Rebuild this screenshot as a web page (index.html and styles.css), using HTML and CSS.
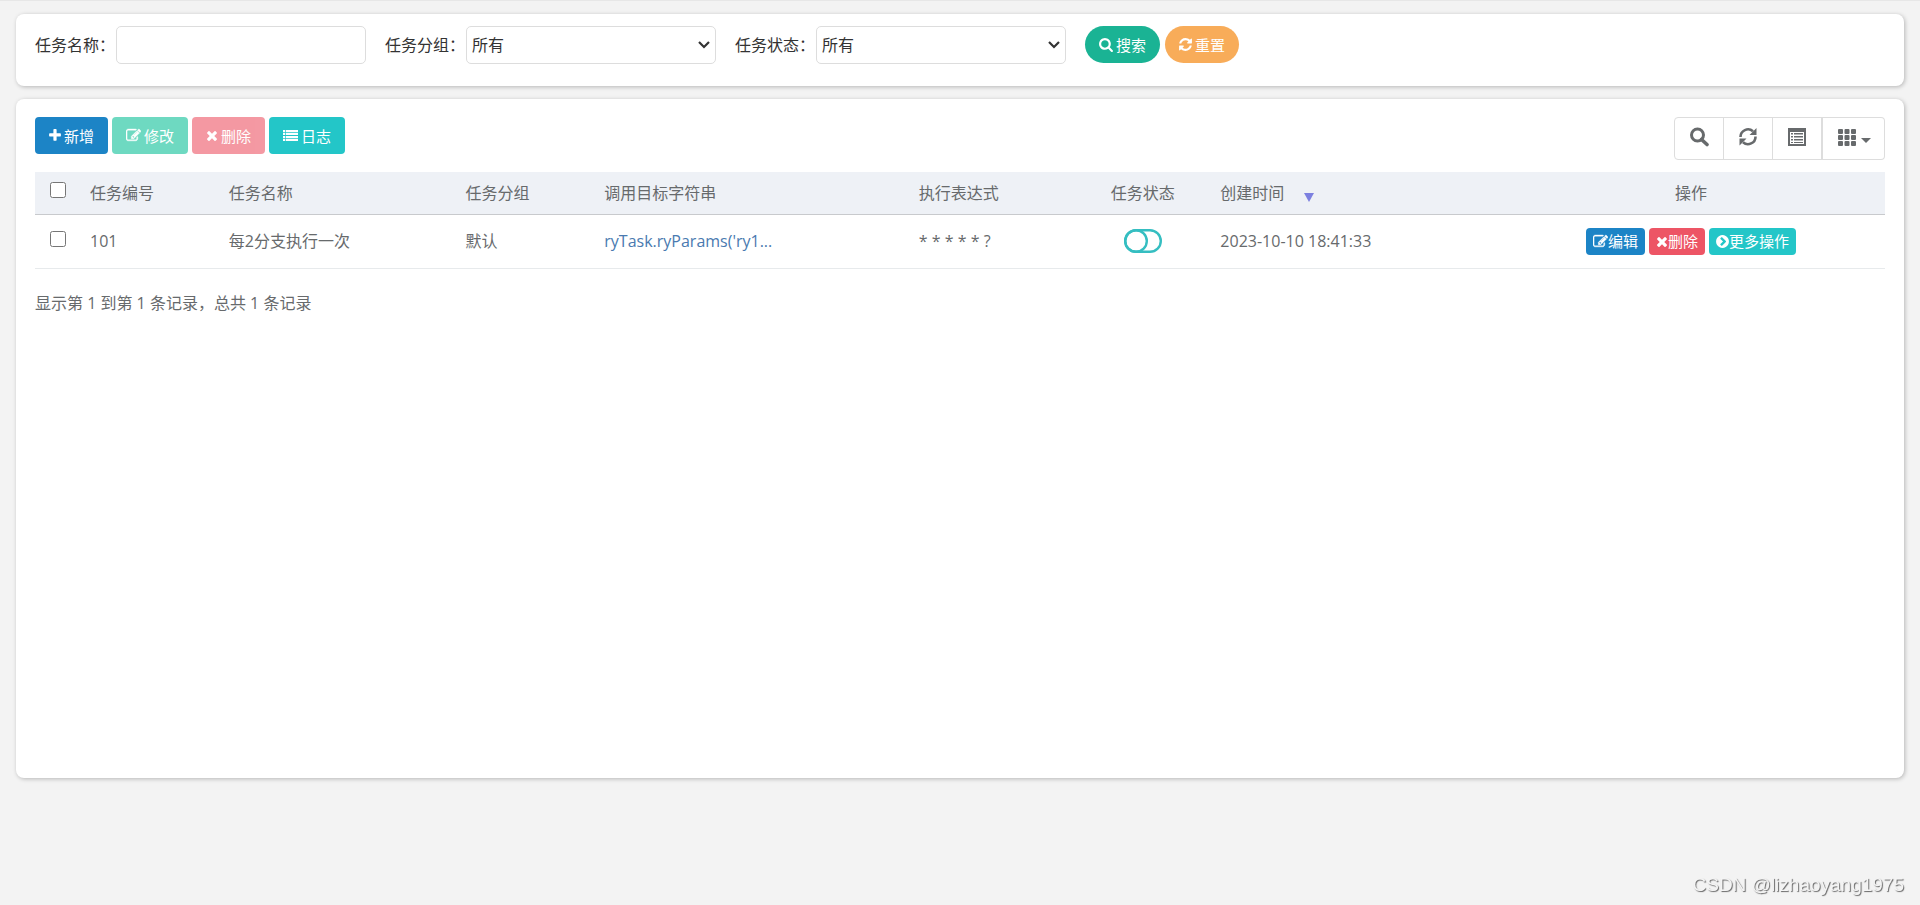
FILE: index.html
```html
<!DOCTYPE html>
<html lang="zh-CN">
<head>
<meta charset="utf-8">
<title>定时任务</title>
<link rel="stylesheet" href="styles.css">
</head>
<body>
<svg class="sprite" aria-hidden="true">
  <symbol id="plus" viewBox="192 0 1408 1792"><path d="M1600 736v192q0 40-28 68t-68 28h-416v416q0 40-28 68t-68 28h-192q-40 0-68-28t-28-68v-416h-416q-40 0-68-28t-28-68v-192q0-40 28-68t68-28h416v-416q0-40 28-68t68-28h192q40 0 68 28t28 68v416h416q40 0 68 28t28 68z"/></symbol>
  <symbol id="edit" viewBox="0 0 1792 1792"><path stroke="currentColor" stroke-width="50" d="M888 1184l116-116-152-152-116 116v56h96v96h56zm440-720q-16-16-33 1l-350 350q-17 17-1 33t33-1l350-350q17-17 1-33zm80 594v190q0 119-84.500 203.500t-203.500 84.500h-832q-119 0-203.500-84.500t-84.500-203.500v-832q0-119 84.500-203.500t203.500-84.500h832q63 0 117 25 15 7 18 23 3 17-9 29l-49 49q-14 14-32 8-23-6-45-6h-832q-66 0-113 47t-47 113v832q0 66 47 113t113 47h832q66 0 113-47t47-113v-126q0-13 9-22l64-64q15-15 35-7t20 29zm-96-738l288 288-672 672h-288v-288zm444 132l-92 92-288-288 92-92q28-28 68-28t68 28l152 152q28 28 28 68t-28 68z"/></symbol>
  <symbol id="times" viewBox="192 0 1408 1792"><path d="M1490 1322q0 40-28 68l-136 136q-28 28-68 28t-68-28l-294-294-294 294q-28 28-68 28t-68-28l-136-136q-28-28-28-68t28-68l294-294-294-294q-28-28-28-68t28-68l136-136q28-28 68-28t68 28l294 294 294-294q28-28 68-28t68 28l136 136q28 28 28 68t-28 68l-294 294 294 294q28 28 28 68z"/></symbol>
  <symbol id="list" viewBox="0 0 1792 1792"><path d="M0 240h256v256H0zM0 592h256v256H0zM0 944h256v256H0zM0 1296h256v256H0zM340 240h1452v256H340zM340 592h1452v256H340zM340 944h1452v256H340zM340 1296h1452v256H340z"/></symbol>
  <symbol id="search" viewBox="64 0 1664 1792"><path d="M1216 832q0-185-131.500-316.500t-316.500-131.500-316.500 131.500-131.500 316.500 131.500 316.500 316.500 131.500 316.500-131.500 131.500-316.500zm512 832q0 52-38 90t-90 38q-54 0-90-38l-343-342q-179 124-399 124-143 0-273.500-55.500t-225-150-150-225-55.500-273.500 55.500-273.500 150-225 225-150 273.500-55.500 273.500 55.500 225 150 150 225 55.500 273.500q0 220-124 399l343 343q37 37 37 90z"/></symbol>
  <symbol id="refresh" viewBox="128 0 1536 1792"><path d="M1639 1056q0 5-1 7-64 268-268 434.500t-478 166.500q-146 0-282.500-55t-243.500-157l-129 129q-19 19-45 19t-45-19-19-45v-448q0-26 19-45t45-19h448q26 0 45 19t19 45-19 45l-137 137q71 66 161 102t187 36q134 0 250-65t186-179q11-17 53-117 8-23 30-23h192q13 0 22.500 9.500t9.500 22.500zm25-800v448q0 26-19 45t-45 19h-448q-26 0-45-19t-19-45 19-45l138-138q-148-137-349-137-134 0-250 65t-186 179q-11 17-53 117-8 23-30 23h-199q-13 0-22.500-9.500t-9.500-22.500v-7q65-268 270-434.500t480-166.500q146 0 284 55.500t245 156.500l130-129q19-19 45-19t45 19 19 45z"/></symbol>
  <symbol id="next" viewBox="128 0 1536 1792"><path d="M845 1395l454-454q19-19 19-45t-19-45l-454-454q-19-19-45-19t-45 19l-102 102q-19 19-19 45t19 45l307 307-307 307q-19 19-19 45t19 45l102 102q19 19 45 19t45-19zm819-499q0 209-103 385.500t-279.500 279.500-385.500 103-385.500-103-279.500-279.500-103-385.500 103-385.500 279.500-279.500 385.500-103 385.500 103 279.500 279.500 103 385.500z"/></symbol>
</svg>

<form class="card search-form">
  <div class="field"><label for="job-name">任务名称：</label><input class="control" id="job-name" type="text"></div>
  <div class="field"><label for="job-group">任务分组：</label><select class="control" id="job-group"><option>所有</option></select></div>
  <div class="field"><label for="job-status">任务状态：</label><select class="control" id="job-status"><option>所有</option></select></div>
  <div class="form-actions">
    <button type="button" class="btn round green"><svg class="w14"><use href="#search"/></svg>搜索</button>
    <button type="button" class="btn round orange"><svg class="w13"><use href="#refresh"/></svg>重置</button>
  </div>
</form>

<main class="card panel">
  <div class="toolbar">
    <div class="actions">
      <button type="button" class="btn blue"><svg class="w12"><use href="#plus"/></svg>新增</button>
      <button type="button" class="btn green" disabled><svg class="w15"><use href="#edit"/></svg>修改</button>
      <button type="button" class="btn red" disabled><svg class="w12"><use href="#times"/></svg>删除</button>
      <button type="button" class="btn teal"><svg class="w15"><use href="#list"/></svg>日志</button>
    </div>
    <div class="tools">
      <button type="button" aria-label="搜索"><svg width="20" height="20" viewBox="0 0 20 20"><circle cx="8.500" cy="8" r="6" fill="none" stroke="currentColor" stroke-width="3"/><path d="M12.500 12.500l5.500 5" fill="none" stroke="currentColor" stroke-width="3.600" stroke-linecap="round"/></svg></button>
      <button type="button" aria-label="刷新"><svg width="20" height="20" viewBox="0 0 20 20"><path d="M2.500 10A7.500 7.500 0 0 1 15 4.300M17.500 9.500A7.500 7.500 0 0 1 5 15.200" fill="none" stroke="currentColor" stroke-width="2.600"/><path d="M18.500 1v7h-7zM1.500 18.500v-7h7z" fill="currentColor"/></svg></button>
      <button type="button" aria-label="视图"><svg width="20" height="20" viewBox="0 0 20 20"><path fill="currentColor" fill-rule="evenodd" d="M1 1h18v18H1zM3 5v12h14V5z"/><path fill="currentColor" d="M4 6h2v1.500H4zM4 9h2v1.500H4zM4 12h2v1.500H4zM4 15h2v1H4zM7 6h9v1.500H7zM7 9h9v1.500H7zM7 12h9v1.500H7zM7 15h9v1H7z"/></svg></button>
      <button type="button" aria-label="列"><svg width="20" height="20" viewBox="0 0 20 20" fill="currentColor"><rect x="1" y="2" width="5" height="5" rx="1"/><rect x="7.500" y="2" width="5" height="5" rx="1"/><rect x="14" y="2" width="5" height="5" rx="1"/><rect x="1" y="8" width="5" height="5" rx="1"/><rect x="7.500" y="8" width="5" height="5" rx="1"/><rect x="14" y="8" width="5" height="5" rx="1"/><rect x="1" y="14" width="5" height="5" rx="1"/><rect x="7.500" y="14" width="5" height="5" rx="1"/><rect x="14" y="14" width="5" height="5" rx="1"/></svg><span class="caret"></span></button>
    </div>
  </div>

  <table class="jobs">
    <colgroup><col class="c-check"><col class="c-id"><col class="c-name"><col class="c-group"><col class="c-target"><col class="c-cron"><col class="c-status"><col class="c-time"><col class="c-op"></colgroup>
    <thead>
      <tr>
        <th class="center"><input type="checkbox" aria-label="全选"></th>
        <th>任务编号</th><th>任务名称</th><th>任务分组</th><th>调用目标字符串</th><th>执行表达式</th>
        <th class="center">任务状态</th><th>创建时间<span class="sort"></span></th><th class="center">操作</th>
      </tr>
    </thead>
    <tbody>
      <tr>
        <td class="center"><input type="checkbox" aria-label="选择 101"></td>
        <td>101</td><td>每2分支执行一次</td><td>默认</td>
        <td><a href="#">ryTask.ryParams('ry1...</a></td>
        <td>* * * * * ?</td>
        <td class="center"><button type="button" class="toggle" aria-label="任务状态"><svg width="38" height="24" viewBox="0 0 38 24" fill="none" stroke="currentColor" stroke-width="2.400"><rect x="1.200" y="1.200" width="35.600" height="21.600" rx="10.800"/><circle cx="12" cy="12" r="10.800"/></svg></button></td>
        <td>2023-10-10 18:41:33</td>
        <td><div class="row-actions">
          <button type="button" class="btn small blue"><svg class="w15"><use href="#edit"/></svg>编辑</button>
          <button type="button" class="btn small red"><svg class="w12"><use href="#times"/></svg>删除</button>
          <button type="button" class="btn small teal"><svg class="w13"><use href="#next"/></svg>更多操作</button>
        </div></td>
      </tr>
    </tbody>
  </table>
  <p class="summary">显示第 1 到第 1 条记录，总共 1 条记录</p>
</main>
<div class="watermark">CSDN @lizhaoyang1975</div>
</body>
</html>
```
FILE: styles.css
```css
* { box-sizing: border-box; }
body {
  margin: 0;
  min-height: 100vh;
  padding: 13px 16px 0;
  border-top: 1px solid #e7e7e7;
  background: #f3f3f3;
  color: #676a6c;
  font: 16px/24px "Open Sans", "Noto Sans CJK SC", sans-serif;
}
button, input, select { font: inherit; margin: 0; }
.sprite { display: none; }

.card {
  background: #fff;
  border-radius: 8px;
  box-shadow: 1px 1px 4px rgba(0, 0, 0, .25);
}

.search-form {
  display: flex;
  flex-wrap: wrap;
  gap: 19px;
  padding: 12px 19px 22px;
  margin-bottom: 13px;
  color: #333;
}
.field { display: flex; align-items: center; }
.field label { width: 81px; white-space: nowrap; }
.control {
  width: 250px;
  height: 38px;
  padding: 0 5px;
  border: 1px solid #ddd;
  border-radius: 5px;
  background: #fff;
  color: #333;
}
select.control {
  appearance: none;
  background: #fff url("data:image/svg+xml,%3Csvg xmlns='http://www.w3.org/2000/svg' width='12' height='8' viewBox='0 0 12 8'%3E%3Cpath d='M1 1l5 5 5-5' fill='none' stroke='%23333' stroke-width='2.2'/%3E%3C/svg%3E") no-repeat right 5px center;
}
.form-actions { display: flex; gap: 5px; }

.btn {
  display: inline-flex;
  align-items: center;
  gap: 3px;
  height: 37px;
  padding: 0 14px;
  border: 0;
  border-radius: 4px;
  color: #fff;
  font-size: 15px;
  line-height: 22px;
  white-space: nowrap;
}
.btn svg { height: 15px; fill: currentColor; }
.w12 { width: 12px; }
.w13 { width: 13px; }
.w14 { width: 14px; }
.w15 { width: 15px; }
.btn.round { border-radius: 19px; }
.btn.small { height: 27px; padding: 0 7px; gap: 0; }
.btn:disabled { opacity: .6; }
.blue { background: #1c84c6; }
.green { background: #1ab394; }
.orange { background: #f8ac59; }
.red { background: #ed5565; }
.teal { background: #23c6c8; }
.btn.green:disabled { background: #0fc199; }

.panel { min-height: 75vh; padding: 18px 19px; }
.toolbar { display: flex; justify-content: space-between; margin-bottom: 12px; }
.actions, .row-actions { display: flex; gap: 4px; }
.tools { display: flex; }
.tools button {
  display: flex;
  align-items: center;
  justify-content: center;
  gap: 4px;
  width: 50px;
  height: 43px;
  margin-left: -1px;
  padding: 0 0 3px;
  border: 1px solid #ddd;
  background: #fff;
  color: #676a6c;
}
.tools button:first-child { border-radius: 4px 0 0 4px; }
.tools button:last-child { width: 64px; border-left-width: 2px; border-radius: 0 4px 4px 0; }
.caret {
  margin-top: 6px;
  border: 5px solid transparent;
  border-top-color: currentColor;
  border-bottom: 0;
}

.jobs { width: 100%; table-layout: fixed; border-collapse: collapse; }
.jobs th, .jobs td { padding: 0 10px; text-align: left; font-weight: 400; white-space: nowrap; }
.jobs th { height: 42px; background: #eef1f6; border-bottom: 1px solid #c8cacd; }
.jobs td { height: 54px; border-bottom: 1px solid #e7eaec; }
.jobs .center { text-align: center; }
.jobs input { display: block; width: 16px; height: 16px; margin: 0 auto 5px; }
.jobs a { color: #4a7ab0; text-decoration: none; }
.c-check { width: 45px; }
.c-id { width: 7.5%; }
.c-name { width: 12.8%; }
.c-group { width: 7.5%; }
.c-target { width: 17%; }
.c-cron { width: 9%; }
.c-status { width: 7.3%; }
.c-time { width: 15.5%; }
.sort {
  display: inline-block;
  margin-left: 20px;
  border: 5px solid transparent;
  border-top: 9px solid #7c80e0;
  border-bottom: 0;
  vertical-align: -3px;
}
.toggle { display: block; margin: 0 auto; padding: 0; border: 0; background: none; color: #35bec1; }
.toggle svg { display: block; }
.row-actions { justify-content: center; }
.summary { margin: 22px 0 0; }

.watermark {
  position: fixed;
  right: 16px;
  bottom: 8px;
  color: #f4f4f4;
  font: 19px/24px "Liberation Sans", sans-serif;
  text-shadow: 1px 1px 1px #666;
}
```
